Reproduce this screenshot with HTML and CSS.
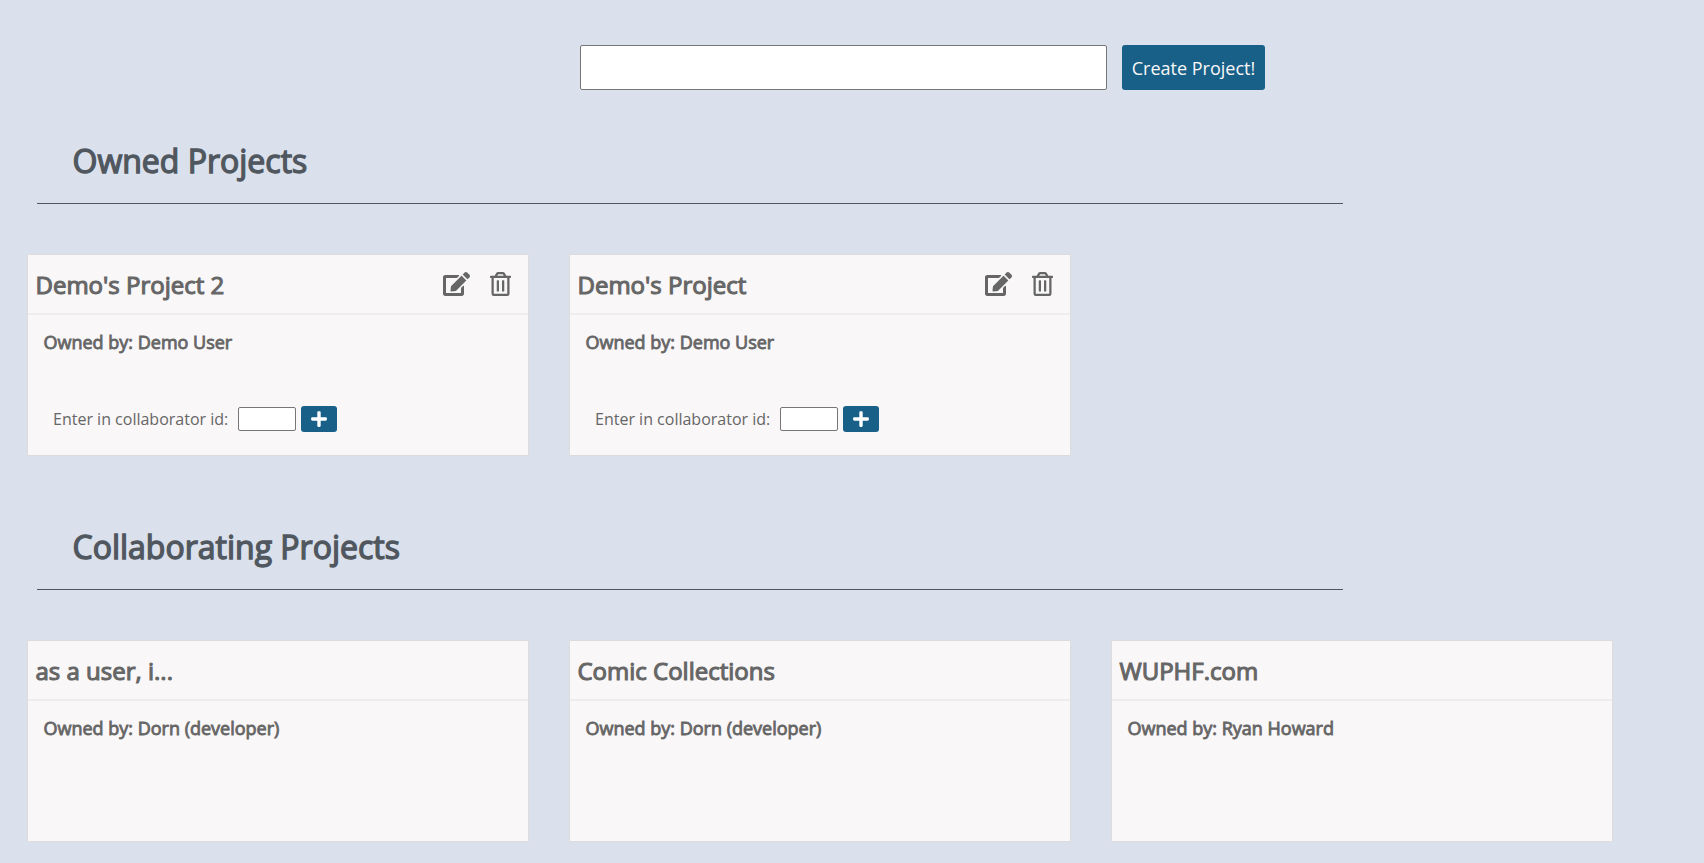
FILE: index.html
```html
<!DOCTYPE html>
<html lang="en">
<head>
<meta charset="utf-8">
<title>Projects</title>
<link rel="stylesheet" href="styles.css">
</head>
<body>
<svg class="sprite" aria-hidden="true">
  <symbol id="edit" viewBox="0 0 576 512"><path d="M402.600 83.200l90.200 90.200c3.800 3.800 3.800 10 0 13.800L274.400 405.600l-92.800 10.300c-12.400 1.400-22.900-9.100-21.500-21.500l10.300-92.800L388.800 83.200c3.800-3.800 10-3.800 13.800 0zm162-22.900l-48.800-48.800c-15.200-15.200-39.900-15.200-55.200 0l-35.400 35.400c-3.800 3.800-3.800 10 0 13.800l90.200 90.200c3.800 3.800 10 3.800 13.800 0l35.400-35.400c15.200-15.300 15.200-40 0-55.200zM384 346.200V448H64V128h229.800c3.200 0 6.200-1.300 8.500-3.500l40-40c7.600-7.600 2.200-20.500-8.500-20.500H48C21.500 64 0 85.500 0 112v352c0 26.500 21.500 48 48 48h352c26.500 0 48-21.500 48-48V306.200c0-10.700-12.900-16-20.500-8.500l-40 40c-2.200 2.300-3.500 5.300-3.500 8.500z"/></symbol>
  <symbol id="trash" viewBox="0 0 448 512"><path d="M268 416h24a12 12 0 0 0 12-12V188a12 12 0 0 0-12-12h-24a12 12 0 0 0-12 12v216a12 12 0 0 0 12 12zM432 80h-82.410l-34-56.700A48 48 0 0 0 274.410 0H173.590a48 48 0 0 0-41.160 23.300L98.410 80H16A16 16 0 0 0 0 96v16a16 16 0 0 0 16 16h16v336a48 48 0 0 0 48 48h288a48 48 0 0 0 48-48V128h16a16 16 0 0 0 16-16V96a16 16 0 0 0-16-16zM171.840 50.910A6 6 0 0 1 177 48h94a6 6 0 0 1 5.150 2.910L293.610 80H154.390zM368 464H80V128h288zm-212-48h24a12 12 0 0 0 12-12V188a12 12 0 0 0-12-12h-24a12 12 0 0 0-12 12v216a12 12 0 0 0 12 12z"/></symbol>
  <symbol id="plus" viewBox="0 0 448 512"><path d="M416 208H272V64c0-17.700-14.300-32-32-32h-32c-17.700 0-32 14.300-32 32v144H32c-17.700 0-32 14.300-32 32v32c0 17.700 14.300 32 32 32h144v144c0 17.700 14.300 32 32 32h32c17.700 0 32-14.300 32-32V304h144c17.700 0 32-14.300 32-32v-32c0-17.700-14.300-32-32-32z"/></symbol>
</svg>
<form class="create">
  <input class="create-name" type="text" aria-label="Project name">
  <button class="create-button" type="button">Create Project!</button>
</form>
<section class="projects">
  <h1 class="section-title">Owned Projects</h1>
  <div class="cards">
    <article class="card">
      <header class="card-header"><h2 class="card-title">Demo's Project 2</h2><svg class="icon-edit"><use href="#edit"/></svg><svg class="icon-trash"><use href="#trash"/></svg></header>
      <p class="owner">Owned by: Demo User</p>
      <div class="collab"><label class="collab-label">Enter in collaborator id:</label><input class="collab-id" type="text" aria-label="Collaborator id"><button class="collab-add" type="button" aria-label="Add"><svg class="icon-plus"><use href="#plus"/></svg></button></div>
    </article>
    <article class="card">
      <header class="card-header"><h2 class="card-title">Demo's Project</h2><svg class="icon-edit"><use href="#edit"/></svg><svg class="icon-trash"><use href="#trash"/></svg></header>
      <p class="owner">Owned by: Demo User</p>
      <div class="collab"><label class="collab-label">Enter in collaborator id:</label><input class="collab-id" type="text" aria-label="Collaborator id"><button class="collab-add" type="button" aria-label="Add"><svg class="icon-plus"><use href="#plus"/></svg></button></div>
    </article>
  </div>
</section>
<section class="projects">
  <h1 class="section-title">Collaborating Projects</h1>
  <div class="cards">
    <article class="card">
      <header class="card-header"><h2 class="card-title">as a user, i...</h2></header>
      <p class="owner">Owned by: Dorn (developer)</p>
    </article>
    <article class="card">
      <header class="card-header"><h2 class="card-title">Comic Collections</h2></header>
      <p class="owner">Owned by: Dorn (developer)</p>
    </article>
    <article class="card">
      <header class="card-header"><h2 class="card-title">WUPHF.com</h2></header>
      <p class="owner">Owned by: Ryan Howard</p>
    </article>
  </div>
</section>
</body>
</html>
```

FILE: styles.css
```css
* { box-sizing: border-box; }
html { overflow: hidden; }
body { margin: 0; height: 863px; overflow: hidden; background: #dae1ec; color: #666; font-family: "Open Sans", sans-serif; }
h1, h2, p { margin: 0; }
.sprite { display: none; }
.create { display: flex; gap: 15px; padding: 45px 0 0 580px; height: 90px; }
.create-name { width: 527px; height: 45px; border: 1px solid #767676; border-radius: 2px; background: #fff; padding: 0 8px; font: inherit; }
.create-button { width: 143px; height: 45px; padding: 0; border: 0; border-radius: 3px; background: #186087; color: #f9f7f8; font: 18px "Open Sans", sans-serif; }
.projects { height: 386px; }
.section-title { width: 1306px; height: 114px; margin-left: 37px; padding: 49px 0 0 35.5px; border-bottom: 1px solid #4f5661; color: #50575f; font-size: 32px; line-height: 44px; font-weight: 400; -webkit-text-stroke: 1.35px currentColor; }
.cards { display: flex; gap: 40px; padding: 50px 0 0 27px; }
.card { flex: none; width: 502px; height: 202px; border: 1px solid #dcdcdc; background: #f9f7f8; }
.card-header { display: flex; align-items: center; height: 60px; padding: 0 17px 0 7.5px; border-bottom: 2px solid #eeecee; }
.card-title { flex: 1; padding-top: 1px; font-size: 24px; line-height: 34px; font-weight: 400; -webkit-text-stroke: 1.1px currentColor; }
.icon-edit { width: 27px; height: 24px; fill: #666; margin-right: 20px; }
.icon-trash { width: 21px; height: 24px; fill: #666; }
.owner { padding: 14px 0 0 15.500px; font-size: 18px; line-height: 26px; -webkit-text-stroke: .85px currentColor; }
.collab { display: flex; align-items: center; margin: 51px 0 0 25px; height: 26px; }
.collab-label { width: 185px; font-size: 16px; line-height: 22px; white-space: nowrap; }
.collab-id { width: 58px; height: 24px; padding: 0 3px; border: 1px solid #767676; border-radius: 2px; background: #fff; }
.collab-add { display: flex; align-items: center; justify-content: center; width: 36px; height: 26px; margin-left: 5px; padding: 0; border: 0; border-radius: 3px; background: #186087; }
.icon-plus { width: 16px; height: 18px; fill: #fff; }
```
